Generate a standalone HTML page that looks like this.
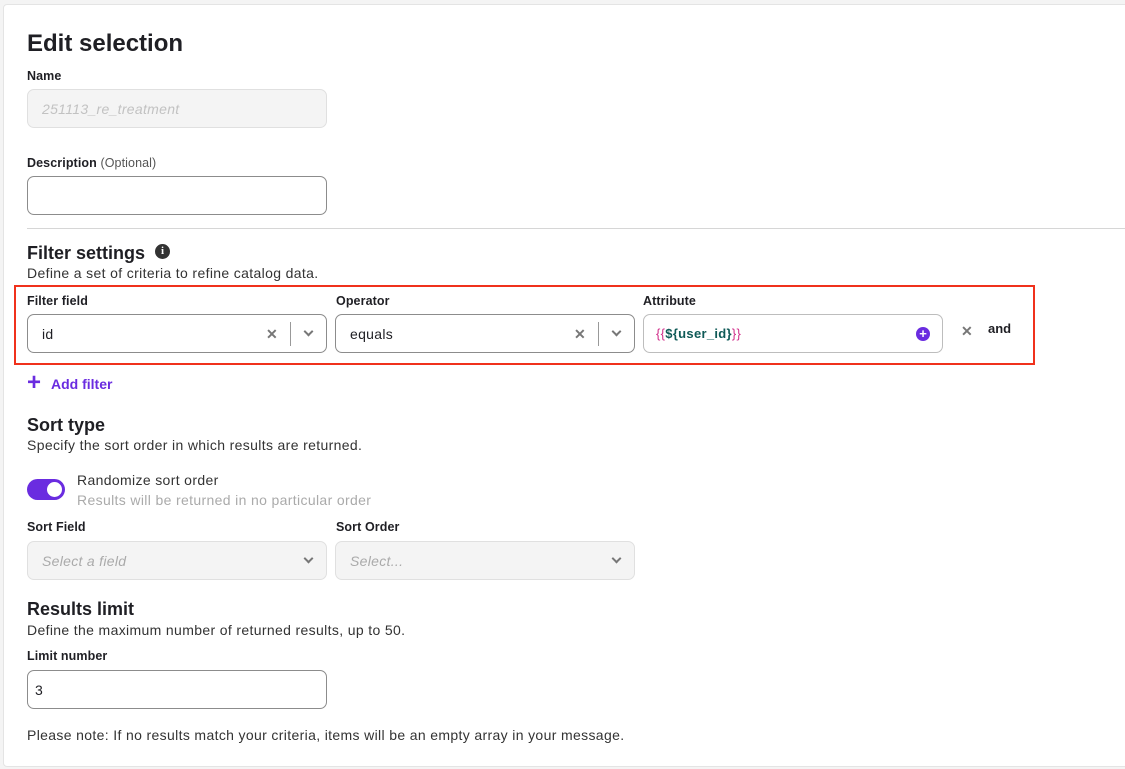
<!DOCTYPE html>
<html><head><meta charset="utf-8"><style>
*{box-sizing:border-box;margin:0;padding:0}
body{width:1125px;height:769px;background:#f4f4f4;font-family:"Liberation Sans",sans-serif;color:#1f1f24;position:relative;overflow:hidden}
.card{position:absolute;left:3px;top:4px;width:1140px;height:763px;background:#fff;border:1px solid #e4e4e4;border-radius:4px}
.a{position:absolute;white-space:nowrap}
h1{font-size:24px;font-weight:bold}
h2{font-size:18px;font-weight:bold}
.lbl{font-size:12.5px;font-weight:bold;letter-spacing:0.1px}
.t{font-size:14px;color:#333;letter-spacing:0.35px}
.inp{position:absolute;height:39px;border:1px solid #8c8c8c;border-radius:7px;background:#fff;font-size:14px;display:flex;align-items:center;padding-left:14px;letter-spacing:0.3px}
.dis{background:#f4f4f4;border-color:#e0e0e0;color:#b5b5b5;font-style:italic}
.x{position:absolute;color:#777;font-size:14px;font-weight:bold}
.chev{position:absolute;width:7px;height:7px;border-right:2px solid #777;border-bottom:2px solid #777;transform:rotate(45deg)}
.sep{position:absolute;width:1px;height:24px;background:#999}
</style></head><body>
<div class="card"></div>
<h1 class="a" style="left:27px;top:30px">Edit selection</h1>
<div class="a lbl" style="left:27px;top:69px">Name</div>
<div class="inp dis" style="left:27px;top:89px;width:300px;color:#c2c2c2">251113_re_treatment</div>
<div class="a lbl" style="left:27px;top:156px">Description <span style="font-weight:normal;color:#555">(Optional)</span></div>
<div class="inp" style="left:27px;top:176px;width:300px"></div>
<div class="a" style="left:27px;top:228px;width:1100px;height:1px;background:#d6d6d6"></div>
<h2 class="a" style="left:27px;top:243px">Filter settings</h2>
<div class="a" style="left:155px;top:244px;width:15px;height:15px;border-radius:50%;background:#333;color:#fff;font-size:11px;font-weight:bold;text-align:center;line-height:15px;font-family:'Liberation Serif',serif">i</div>
<div class="a t" style="left:27px;top:265px">Define a set of criteria to refine catalog data.</div>
<div class="a" style="left:14px;top:285px;width:1021px;height:80px;border:2.5px solid #f0311c"></div>
<div class="a lbl" style="left:27px;top:294px">Filter field</div>
<div class="a lbl" style="left:336px;top:294px">Operator</div>
<div class="a lbl" style="left:643px;top:294px">Attribute</div>
<div class="inp" style="left:27px;top:314px;width:300px">id</div>
<div class="x" style="left:266px;top:326px">✕</div><div class="sep" style="left:290px;top:322px"></div><div class="chev" style="left:305px;top:328px"></div>
<div class="inp" style="left:335px;top:314px;width:300px">equals</div>
<div class="x" style="left:574px;top:326px">✕</div><div class="sep" style="left:598px;top:322px"></div><div class="chev" style="left:613px;top:328px"></div>
<div class="inp" style="left:643px;top:314px;width:300px;border-color:#bdbdbd;font-size:13px;font-weight:bold;padding-left:12px"><span style="color:#d02d8a;font-weight:normal">{{</span><span style="color:#0f5a57">${user_id}</span><span style="color:#d02d8a;font-weight:normal">}}</span></div>
<div class="a" style="left:916px;top:327px;width:14px;height:14px;border-radius:50%;background:#6a2ce0;color:#fff;font-size:13px;font-weight:bold;text-align:center;line-height:14px">+</div>
<div class="x" style="left:961px;top:323px">✕</div>
<div class="a" style="left:988px;top:321px;font-size:13px;font-weight:bold">and</div>
<div class="a" style="left:27px;top:372px;color:#6a2ce0;font-size:24px;font-weight:bold;line-height:22px">+</div>
<div class="a" style="left:51px;top:376px;color:#6a2ce0;font-size:14px;font-weight:bold">Add filter</div>
<h2 class="a" style="left:27px;top:415px">Sort type</h2>
<div class="a t" style="left:27px;top:437px">Specify the sort order in which results are returned.</div>
<div class="a" style="left:27px;top:479px;width:38px;height:21px;border-radius:11px;background:#6a2ce0"></div>
<div class="a" style="left:47px;top:482px;width:15px;height:15px;border-radius:50%;background:#fff"></div>
<div class="a t" style="left:77px;top:472px">Randomize sort order</div>
<div class="a t" style="left:77px;top:492px;color:#aaa">Results will be returned in no particular order</div>
<div class="a lbl" style="left:27px;top:520px">Sort Field</div>
<div class="a lbl" style="left:336px;top:520px">Sort Order</div>
<div class="inp dis" style="left:27px;top:541px;width:300px;color:#aaa">Select a field</div><div class="chev" style="left:305px;top:555px"></div>
<div class="inp dis" style="left:335px;top:541px;width:300px;color:#aaa">Select...</div><div class="chev" style="left:613px;top:555px"></div>
<h2 class="a" style="left:27px;top:599px">Results limit</h2>
<div class="a t" style="left:27px;top:622px">Define the maximum number of returned results, up to 50.</div>
<div class="a lbl" style="left:27px;top:649px">Limit number</div>
<div class="inp" style="left:27px;top:670px;width:300px;padding-left:7px">3</div>
<div class="a t" style="left:27px;top:727px">Please note: If no results match your criteria, items will be an empty array in your message.</div>
</body></html>
